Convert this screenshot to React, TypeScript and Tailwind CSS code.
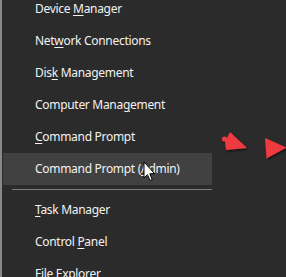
import React from "react";

type Item = { pre: string; key: string; post: string; active?: boolean };

const top: Item[] = [
  { pre: "Device ", key: "M", post: "anager" },
  { pre: "Net", key: "w", post: "ork Connections" },
  { pre: "Dis", key: "k", post: " Management" },
  { pre: "Computer Mana", key: "g", post: "ement" },
  { pre: "", key: "C", post: "ommand Prompt" },
  { pre: "Command Prompt (", key: "A", post: "dmin)", active: true },
];
const bottom: Item[] = [
  { pre: "", key: "T", post: "ask Manager" },
  { pre: "Control ", key: "P", post: "anel" },
  { pre: "", key: "F", post: "ile Explorer" },
];

function Row({ it }: { it: Item }) {
  return (
    <div
      className={`h-[32px] flex items-center pl-[32px] whitespace-nowrap ${
        it.active ? "bg-[#414141]" : ""
      }`}
    >
      <span>
        {it.pre}
        <span className="underline underline-offset-[2px] decoration-1">{it.key}</span>
        {it.post}
      </span>
    </div>
  );
}

export default function App() {
  return (
    <div
      className="relative w-[286px] h-[277px] overflow-hidden bg-[#2b2b2b] border-l-2 border-[#8a8a8a] text-[#f2f2f2] text-[12px] tracking-[-0.3px]"
      style={{ fontFamily: '"Noto Sans", "Open Sans", sans-serif' }}
    >
      <div className="mt-[-7px] ml-[1px] w-[209px] flex flex-col">
        {top.map((it) => (
          <Row key={it.pre + it.key} it={it} />
        ))}
        <div className="h-[9px] flex items-center pl-[9px]">
          <div className="h-px w-full bg-[#7c7c7c] mt-[-1px]" />
        </div>
        {bottom.map((it) => (
          <Row key={it.pre + it.key} it={it} />
        ))}
      </div>

      <svg className="absolute left-0 top-0" width="286" height="277" viewBox="0 0 286 277">
        <defs>
          <filter id="sh" x="-50%" y="-50%" width="200%" height="200%">
            <feDropShadow dx="1" dy="1.5" stdDeviation="1" floodColor="#000" floodOpacity="0.6" />
          </filter>
        </defs>
        <g filter="url(#sh)" fill="#ee3a40">
          <polygon points="228,132 245,148 224,150 223,142" />
          <circle cx="222.5" cy="139" r="2.6" />
          <polygon points="263,138 284.5,147.5 264.5,158.5" />
        </g>
        <path
          d="M142 162 L142 178 L145.5 174.6 L148 180.5 L150.2 179.5 L147.8 173.8 L152.6 173.6 Z"
          fill="#fff"
          stroke="#000"
          strokeWidth="1"
          strokeLinejoin="round"
        />
      </svg>
    </div>
  );
}
